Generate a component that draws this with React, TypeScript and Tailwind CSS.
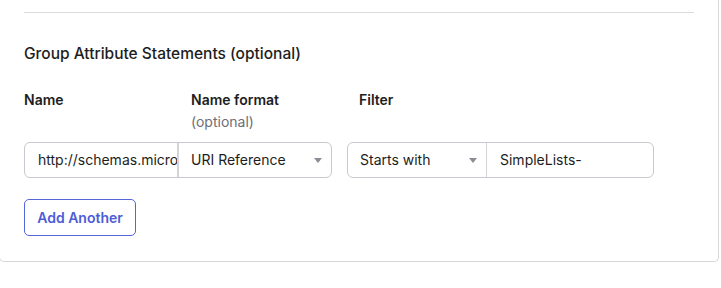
function Caret() {
  return (
    <svg width="8" height="5" viewBox="0 0 8 5" className="shrink-0">
      <path d="M0 0h8L4 5z" fill="#8c8c96" />
    </svg>
  );
}

export default function App() {
  return (
    <div className="w-[721px] h-[288px] bg-white overflow-hidden font-['Inter',sans-serif] text-[#1d1d21]">
      <div className="-ml-px w-[720px] px-6 pb-[25px] border-x border-b border-[#d7d7dc] rounded-b-[5px]">
        <div className="pt-3">
          <div className="h-px bg-[#dcdce0]" />
        </div>

        <h3 className="mt-[31px] text-[15.5px] leading-5 font-medium">
          Group Attribute Statements (optional)
        </h3>

        <div className="mt-[26px] flex items-start">
          <div className="w-[155px] text-sm font-semibold leading-5">Name</div>
          <div className="w-[168px] pl-3">
            <div className="text-sm font-semibold leading-5">Name format</div>
            <div className="mt-[2px] text-sm leading-5 text-[#6e6e78]">(optional)</div>
          </div>
          <div className="pl-3 text-sm font-semibold leading-5">Filter</div>
        </div>

        <div className="mt-[10px] flex items-center gap-[15px]">
          <div className="flex h-9 w-[308px] rounded-[6px] border border-[#c9c9cf] text-sm">
            <div className="w-[154px] overflow-hidden whitespace-nowrap pl-[13px] flex items-center border-r-2 border-[#d3d3d8]">
              http://schemas.microsoft.com/ws/2008/06/identity/claims/groups
            </div>
            <div className="flex flex-1 items-center justify-between pl-3 pr-[9px]">
              <span>URI Reference</span>
              <Caret />
            </div>
          </div>
          <div className="flex h-9 w-[307px] rounded-[6px] border border-[#c9c9cf] text-sm">
            <div className="flex w-[139px] items-center justify-between pl-3 pr-[9px] border-r border-[#d3d3d8]">
              <span>Starts with</span>
              <Caret />
            </div>
            <div className="flex flex-1 items-center pl-[13px]">SimpleLists-</div>
          </div>
        </div>

        <button className="mt-[21px] h-[37px] w-[112px] rounded-[5px] border border-[#5565da] text-sm font-semibold text-[#4c5dd6]">
          Add Another
        </button>
      </div>
    </div>
  );
}
